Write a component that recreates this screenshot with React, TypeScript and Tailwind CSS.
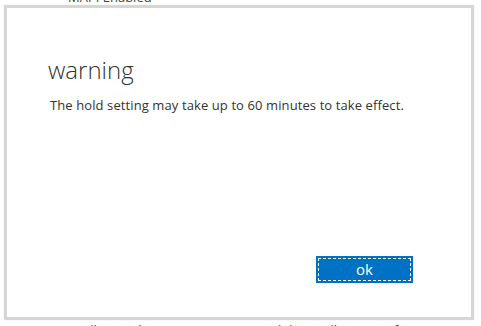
import React from "react";

export default function App() {
  return (
    <div
      className="w-[481px] h-[326px] overflow-hidden bg-white flex flex-col text-[#333333]"
      style={{ fontFamily: '"Open Sans", "Noto Sans", sans-serif' }}
    >
      <div className="h-[5px] shrink-0 relative">
        <div className="absolute left-[68px] top-[-11px] text-[13px] leading-[16px] text-[#444]">
          MAPI Enabled
        </div>
      </div>
      <div className="shrink-0 ml-[4px] w-[470px] h-[315px] border-[3px] border-[#d6d6d6] bg-white flex flex-col pl-[41px] pr-[58px] pt-[47px] pb-[34px] shadow-[0_0_2px_rgba(0,0,0,0.08)]">
        <div className="text-[24px] leading-[30px] font-light text-[#333]">warning</div>
        <div className="mt-[12px] text-[13px] leading-[16px] text-[#333] pl-[2px] tracking-[0.1px]">
          The hold setting may take up to 60 minutes to take effect.
        </div>
        <div className="flex-1" />
        <div className="flex justify-end">
          <button className="w-[97px] h-[27px] bg-[#0072c6] p-[2px] flex">
            <span className="flex-1 border border-dashed border-white flex items-center justify-center text-white text-[15px] leading-none">
              ok
            </span>
          </button>
        </div>
      </div>
      <div className="shrink-0 pl-[68px] mt-[2px] text-[13px] leading-[16px] text-[#444] whitespace-nowrap">
        Mailbox archive restrictions control the mailbox size of
      </div>
    </div>
  );
}
